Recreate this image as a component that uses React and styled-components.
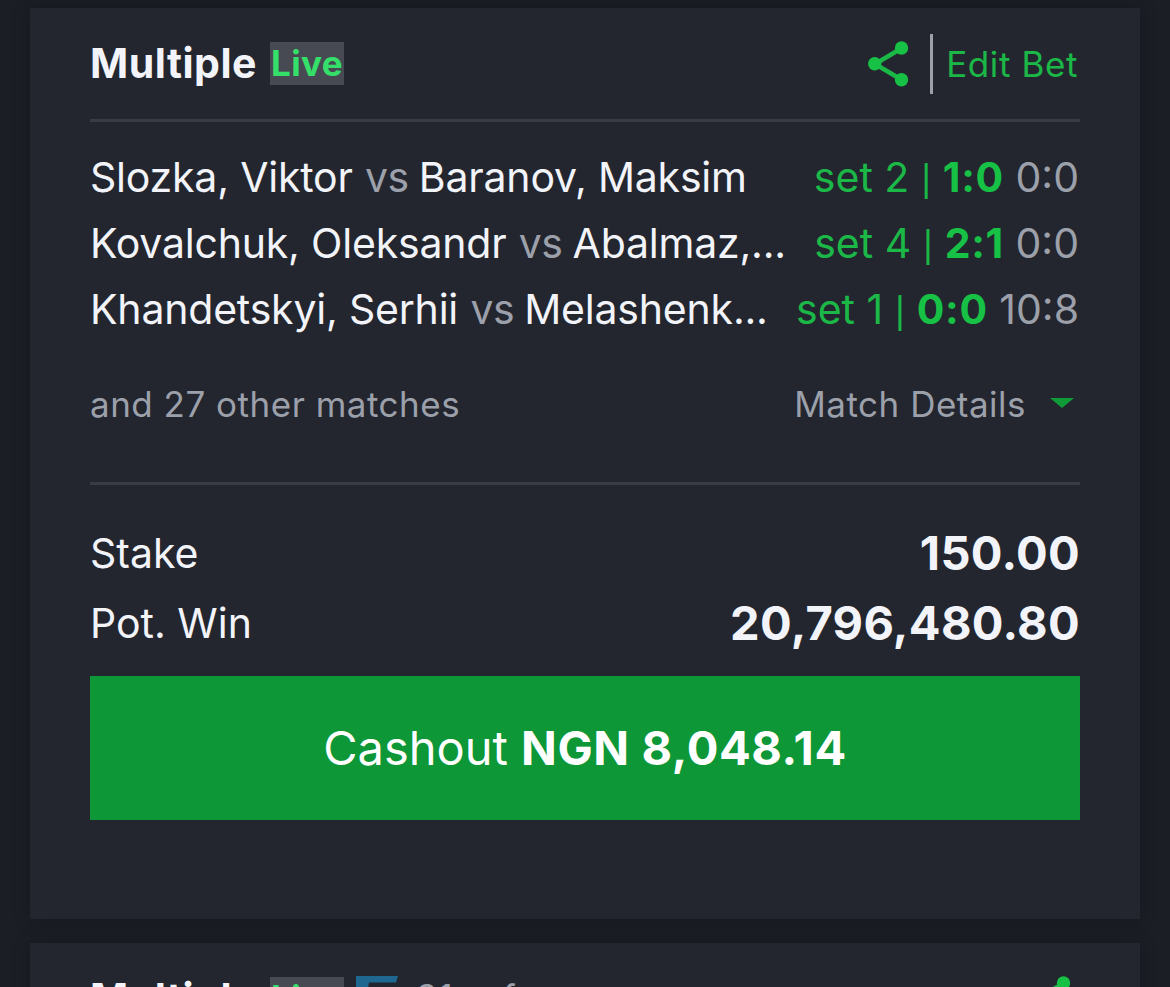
import React from "react"
import styled, { createGlobalStyle } from "styled-components"

const colors = {
  page: "#1b1e25",
  card: "#23262e",
  line: "#3a3c44",
  text: "#f2f4f9",
  muted: "#9ca0ab",
  green: "#1bb848",
  bright: "#16c145",
  button: "#0d9737",
}

const matches = [
  { home: "Slozka, Viktor", away: "Baranov, Maksim", set: "set 2", sets: "1:0", points: "0:0" },
  { home: "Kovalchuk, Oleksandr", away: "Abalmaz,...", set: "set 4", sets: "2:1", points: "0:0" },
  { home: "Khandetskyi, Serhii", away: "Melashenk...", set: "set 1", sets: "0:0", points: "10:8" },
]

const ShareIcon = () => (
  <Share viewBox="0 0 42 46">
    <path d="M34 7 7 23l27 16" fill="none" stroke={colors.green} strokeWidth="4.5" />
    <circle cx="33.5" cy="7" r="6.7" fill={colors.bright} />
    <circle cx="6.7" cy="22.7" r="6.7" fill={colors.bright} />
    <circle cx="33.5" cy="38.7" r="6.7" fill={colors.bright} />
  </Share>
)

const FlexiIcon = () => (
  <Flexi viewBox="0 0 42 46">
    <path d="M0 0h42l-2 6.5H13L11 18h22l-2 7H10L5 46H0z" fill="#1d6790" />
  </Flexi>
)

export default function App() {
  return (
    <Page>
      <GlobalStyle />
      <Card>
        <Header>
          <Title>Multiple</Title>
          <Live>Live</Live>
          <Actions>
            <ShareIcon />
            <Divider />
            <EditBet>Edit Bet</EditBet>
          </Actions>
        </Header>
        <Matches>
          {matches.map(match => (
            <Match key={match.home}>
              <Teams>
                {match.home} <Versus>vs</Versus> {match.away}
              </Teams>
              <Score>
                {match.set} <Bar>|</Bar> <b>{match.sets}</b> <Muted>{match.points}</Muted>
              </Score>
            </Match>
          ))}
        </Matches>
        <More>
          <span>and 27 other matches</span>
          <Details>
            Match Details
            <Caret />
          </Details>
        </More>
        <Totals>
          <Total>
            <Label>Stake</Label>
            <Amount>150.00</Amount>
          </Total>
          <Total>
            <Label>Pot. Win</Label>
            <Amount>20,796,480.80</Amount>
          </Total>
        </Totals>
        <Cashout>
          Cashout <b>NGN 8,048.14</b>
        </Cashout>
      </Card>
      <Card>
        <Header>
          <Title>Multiple</Title>
          <Live>Live</Live>
          <FlexiIcon />
          <FlexiText>31 of</FlexiText>
          <Actions $inset>
            <ShareIcon />
          </Actions>
        </Header>
      </Card>
    </Page>
  )
}

const GlobalStyle = createGlobalStyle`
  * {
    box-sizing: border-box;
  }
  body {
    margin: 0;
    background: ${colors.page};
    color: ${colors.text};
    font-family: Inter, "Liberation Sans", sans-serif;
    font-size: 41px;
    overflow: hidden;
  }
  b {
    font-weight: 700;
  }
`

const Page = styled.main`
  height: 987px;
  padding: 8px 30px 0;
  display: flex;
  flex-direction: column;
  gap: 24px;
  overflow: hidden;
`

const Card = styled.section`
  flex: none;
  height: 911px;
  padding: 0 60px;
  background: ${colors.card};
  box-shadow: 0 0 12px rgba(16, 19, 27, 0.5);
`

const Header = styled.header`
  height: 114px;
  display: flex;
  align-items: center;
  border-bottom: 3px solid ${colors.line};
`

const Title = styled.h2`
  margin: 0;
  width: 180px;
  padding-bottom: 2px;
  font-size: 41px;
  font-weight: 700;
  letter-spacing: 0.5px;
  white-space: nowrap;
`

const Live = styled.span`
  width: 74px;
  height: 43px;
  background: #474a52;
  color: #35e06a;
  font-size: 35px;
  font-weight: 700;
  letter-spacing: 0.4px;
  line-height: 43px;
  text-align: center;
`

const Actions = styled.div`
  margin-left: auto;
  margin-right: ${props => (props.$inset ? "8px" : "2px")};
  display: flex;
  align-items: center;
`

const Share = styled.svg`
  width: 42px;
  height: 46px;
`

const Divider = styled.span`
  width: 3px;
  height: 60px;
  margin: 0 13px 0 20px;
  background: ${colors.muted};
`

const EditBet = styled.span`
  color: ${colors.green};
  font-size: 35px;
  letter-spacing: 0.6px;
`

const Flexi = styled.svg`
  width: 42px;
  height: 46px;
  margin-left: 12px;
`

const FlexiText = styled.span`
  margin-left: 18px;
  padding-bottom: 3px;
  color: ${colors.muted};
  font-size: 35px;
  letter-spacing: 1px;
  word-spacing: 16px;
`

const Matches = styled.div`
  padding-top: 22px;
`

const Match = styled.div`
  height: 66px;
  display: flex;
  align-items: center;
  justify-content: space-between;
  white-space: nowrap;
`

const Teams = styled.span`
  letter-spacing: -0.2px;
`

const Score = styled.span`
  padding-right: 1px;
  color: ${colors.green};

  b {
    color: ${colors.bright};
    letter-spacing: 0.7px;
  }
`

const Bar = styled.span`
  font-size: 30px;
  font-weight: 500;
`

const Muted = styled.span`
  color: ${colors.muted};
`

const Versus = styled(Muted)`
  margin: 0 -1px 0 1px;
  letter-spacing: -0.6px;
`

const More = styled.div`
  height: 143px;
  padding-bottom: 17px;
  display: flex;
  align-items: center;
  justify-content: space-between;
  border-bottom: 3px solid ${colors.line};
  color: ${colors.muted};
  font-size: 35px;
  letter-spacing: 0.5px;
`

const Details = styled.span`
  display: flex;
  align-items: center;
`

const Caret = styled.i`
  margin: 0 6px 2px 24px;
  border: 12px solid transparent;
  border-top: 10px solid #0e9b38;
  border-bottom: 0;
`

const Totals = styled.div`
  padding-top: 33px;
`

const Total = styled.div`
  height: 70px;
  display: flex;
  align-items: center;
  justify-content: space-between;
`

const Label = styled.span`
  font-size: 41px;
`

const Amount = styled.strong`
  padding-bottom: 2px;
  font-size: 47px;
  font-weight: 700;
  letter-spacing: 0.3px;
`

const Cashout = styled.button`
  width: 100%;
  height: 144px;
  margin-top: 18px;
  padding: 0 0 2px;
  border: 0;
  background: ${colors.button};
  color: #fff;
  font-family: inherit;
  font-size: 47px;

  b {
    letter-spacing: 0.6px;
  }
`
